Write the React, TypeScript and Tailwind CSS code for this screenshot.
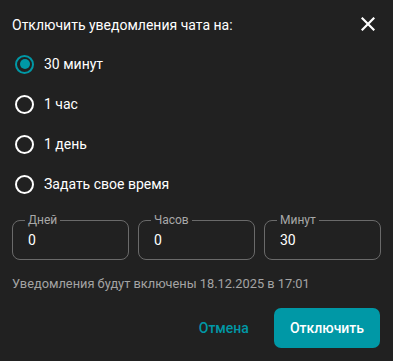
import React from "react";

const Radio = ({ checked, label }: { checked?: boolean; label: string }) => (
  <div className="flex items-center h-[40px] pl-[15px]">
    <div
      className={
        "w-[19px] h-[19px] rounded-full border-2 flex items-center justify-center " +
        (checked ? "border-[#0098a6]" : "border-white")
      }
    >
      {checked && <div className="w-[10px] h-[10px] rounded-full bg-[#0098a6]" />}
    </div>
    <span className="ml-[10px] text-[14px] text-white">{label}</span>
  </div>
);

const Field = ({ label, value }: { label: string; value: string }) => (
  <div className="relative flex-1 h-[40px] rounded-[8px] border border-[#6a6a6a] flex items-center px-[15px]">
    <span className="absolute -top-[9px] left-[12px] px-[3px] bg-[#212121] text-[12px] leading-[16px] text-[#a8a8a8]">
      {label}
    </span>
    <span className="text-[14px] text-white mt-[1px]">{value}</span>
  </div>
);

export default function App() {
  return (
    <div
      className="w-[393px] h-[361px] bg-[#212121] flex flex-col"
      style={{ fontFamily: "Roboto, 'Noto Sans', sans-serif" }}
    >
      <div className="flex items-center justify-between pl-[12px] pr-[18px] pt-[16px] h-[34px]">
        <span className="text-[14px] text-white">Отключить уведомления чата на:</span>
        <svg width="14" height="14" viewBox="0 0 14 14" className="-mt-[2px]">
          <path d="M1.5 1.5L12.5 12.5M12.5 1.5L1.5 12.5" stroke="white" strokeWidth="2.2" strokeLinecap="square" />
        </svg>
      </div>
      <div className="flex flex-col mt-[10px]">
        <Radio checked label="30 минут" />
        <Radio label="1 час" />
        <Radio label="1 день" />
        <Radio label="Задать свое время" />
      </div>
      <div className="flex gap-[9px] px-[12px] mt-[16px]">
        <Field label="Дней" value="0" />
        <Field label="Часов" value="0" />
        <Field label="Минут" value="30" />
      </div>
      <div className="px-[12px] mt-[15px] text-[12.8px] leading-[18px] text-[#a4a4a4]">
        Уведомления будут включены 18.12.2025 в 17:01
      </div>
      <div className="flex justify-end items-center px-[13px] mt-[15px] gap-[25px]">
        <button className="text-[14px] font-medium text-[#0098a6]">Отмена</button>
        <button className="h-[40px] px-[16px] rounded-[7px] bg-[#0098a6] text-white text-[14px] font-medium">
          Отключить
        </button>
      </div>
    </div>
  );
}
